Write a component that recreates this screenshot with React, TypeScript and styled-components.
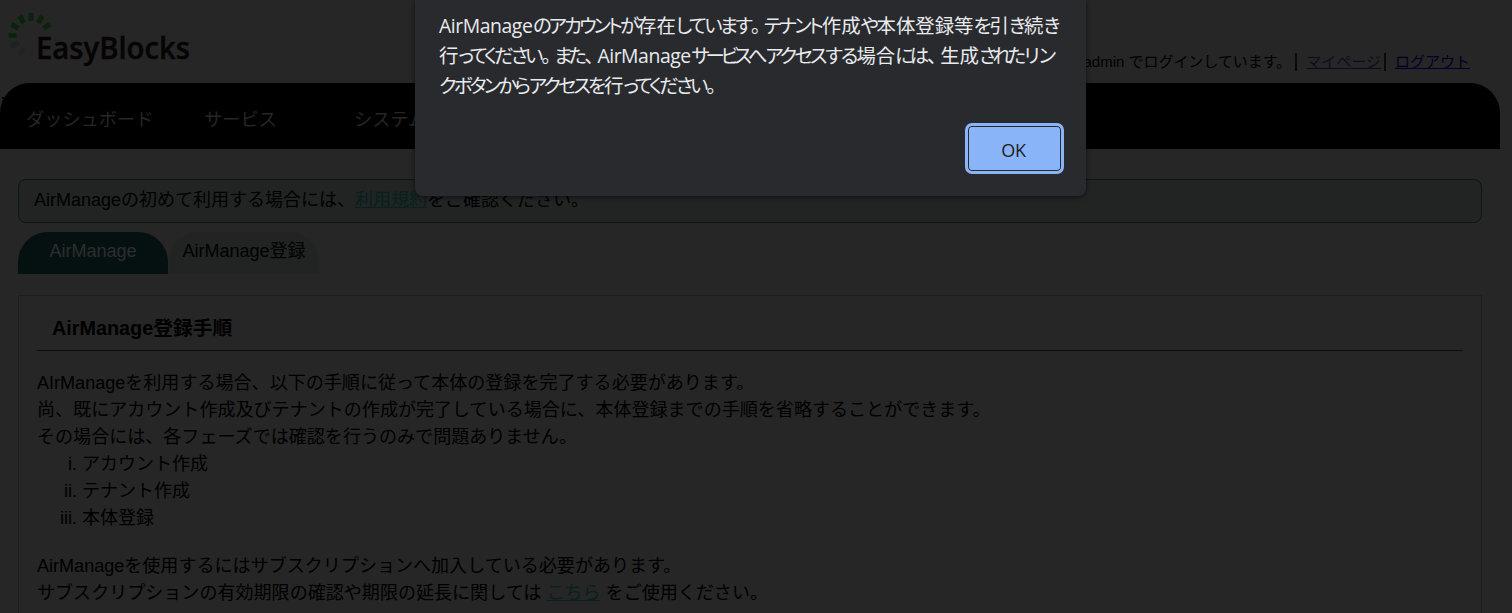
import React from "react";
import styled, { createGlobalStyle } from "styled-components";

const Global = createGlobalStyle`
  * { box-sizing: border-box; }
  html, body { margin: 0; height: 613px; overflow: hidden; background: #262626; }
  body {
    font: 400 18px/27px "Liberation Sans", "Noto Sans CJK JP", sans-serif;
    color: #000;
  }
`;

const Page = styled.div`
  height: 613px;
  overflow: hidden;
  position: relative;
  display: flex;
  flex-direction: column;
`;

const Header = styled.header`
  height: 83px;
  width: 1500px;
  flex: none;
  display: flex;
  justify-content: space-between;
  align-items: flex-start;
  padding-right: 30px;
`;

const Logo = styled.svg`
  display: block;
  width: 200px;
  height: 80px;
  overflow: visible;
`;

const UserBar = styled.div`
  display: flex;
  align-items: center;
  height: 18px;
  margin-top: 53px;
  font-size: 15px;
  line-height: 18px;
  white-space: nowrap;
`;

const Login = styled.span`
  padding-right: 4px;
  letter-spacing: -0.02px;
`;

const HeaderLink = styled.a<{ $color: string; $end: number }>`
  color: ${(p) => p.$color};
  text-decoration: underline;
  border-left: 2px solid #0c0a08;
  padding-left: 9px;
  margin-right: ${(p) => p.$end}px;
`;

const Nav = styled.nav`
  width: 1500px;
  height: 66px;
  flex: none;
  display: flex;
  align-items: center;
  padding: 8px 0 0 26px;
  background: #000;
  border-radius: 30px 30px 0 0;
  color: #262626;
  font-size: 18.2px;
`;

const NavItem = styled.span<{ $width: number }>`
  width: ${(p) => p.$width}px;
  white-space: nowrap;
`;

const Stray = styled.span`
  position: absolute;
  left: 2px;
  top: 97px;
  width: 2px;
  height: 2px;
  background: #000;
`;

const Main = styled.main`
  width: 1464px;
  margin: 30px 0 0 18px;
`;

const Notice = styled.div`
  height: 44px;
  padding: 7px 15px;
  border: 1px solid #071716;
  border-radius: 8px;
  background: #212423;
`;

const GreenLink = styled.a`
  color: #08201f;
  text-decoration: underline;
`;

const Tabs = styled.div`
  display: flex;
  gap: 1px;
  margin-top: 9px;
`;

const Tab = styled.div<{ $active?: boolean }>`
  width: 150px;
  height: 42px;
  padding-top: 6px;
  text-align: center;
  border-radius: 30px 30px 0 0;
  background: ${(p) => (p.$active ? "#051111" : "#212423")};
  color: ${(p) => (p.$active ? "#2c2e2e" : "#000")};
`;

const Panel = styled.section`
  height: 400px;
  margin-top: 21px;
  padding: 12px 18px;
  border: 1px solid #1e1e1e;
`;

const Title = styled.h2`
  margin: 0 0 19px;
  height: 43px;
  padding: 7px 15px 0;
  border-bottom: 1px solid #051111;
  font-size: 19.8px;
  font-weight: 700;
`;

const Text = styled.p`
  margin: 0;
  font-size: 18.06px;
  white-space: nowrap;
`;

const Steps = styled.ol`
  margin: 0 0 21px;
  padding-left: 45px;
  list-style: lower-roman;
`;

const Dialog = styled.div`
  position: absolute;
  left: 415px;
  top: 0;
  width: 671px;
  height: 196px;
  padding: 11px 22px 22px 24px;
  display: flex;
  flex-direction: column;
  justify-content: space-between;
  background: #292a2d;
  border-radius: 0 0 8px 8px;
  box-shadow: 0 1px 5px rgba(0, 0, 0, 0.55);
  color: #e8eaed;
`;

const Line = styled.div`
  display: flex;
  height: 30px;
  font: 400 19.4px/30px "Open Sans", "Noto Sans CJK JP", sans-serif;
  font-feature-settings: "palt";
  white-space: nowrap;
`;

const Kanji = styled.span`
  flex: none;
`;

/* Kana are set tighter than kanji, so each run is spread over its own measure. */
const Kana = styled.span<{ $width: number }>`
  flex: none;
  width: ${(p) => p.$width}px;
  height: 30px;
  padding-right: 2px;
  letter-spacing: -4px;
  text-align: justify;
  text-align-last: justify;
  white-space: normal;
  word-break: keep-all;
`;

const Latin = styled.span`
  flex: none;
  width: 94px;
  letter-spacing: -0.45px;
`;

const OkButton = styled.button`
  align-self: flex-end;
  width: 99px;
  height: 51px;
  padding: 2px 2px 0 0;
  border: 3px solid #8ab4f8;
  border-radius: 7px;
  background: #8ab4f8;
  box-shadow: inset 0 0 0 1px #292a2d;
  color: #202124;
  font: 400 18px/24px "Open Sans", sans-serif;
  letter-spacing: -0.3px;
`;

const dots: [number, string][] = [
  [60, "#0b230c"],
  [30, "#0b230c"],
  [0, "#0b230c"],
  [-30, "#0b230c"],
  [-60, "#0b230c"],
  [-90, "#0b230c"],
  [-120, "#1c241c"],
  [-150, "#212521"],
  [180, "#242524"],
];

type Piece = { latin: string } | { kanji: string } | { kana: string; width: number };

const latin = (text: string): Piece => ({ latin: text });
const kanji = (text: string): Piece => ({ kanji: text });
const kana = (text: string, width: number): Piece => ({ kana: text, width });

const lines: Piece[][] = [
  [
    latin("AirManage"),
    kana("のアカウントが", 104),
    kanji("存在"),
    kana("しています", 75),
    kana("。", 13),
    kana("テナント", 58),
    kanji("作成"),
    kana("や", 16),
    kanji("本体登録等"),
    kana("を", 16),
    kanji("引"),
    kana("き", 15),
    kanji("続"),
    kana("き", 15),
  ],
  [
    kanji("行"),
    kana("ってください", 83),
    kana("。", 13),
    kana("また", 30),
    kana("、", 13),
    latin("AirManage"),
    kana("サービスへ", 74),
    kana("アクセス", 60),
    kana("する", 31),
    kanji("場合"),
    kana("には", 32),
    kana("、", 13),
    kanji("生成"),
    kana("された", 45),
    kana("リン", 30),
  ],
  [
    kana("クボタンから", 90),
    kana("アクセスを", 75),
    kanji("行"),
    kana("ってください", 83),
    kana("。", 12),
  ],
];

function MessagePiece({ piece }: { piece: Piece }) {
  if ("latin" in piece) return <Latin>{piece.latin}</Latin>;
  if ("kanji" in piece) return <Kanji>{piece.kanji}</Kanji>;
  return <Kana $width={piece.width}>{piece.kana}</Kana>;
}

export default function App() {
  return (
    <>
      <Global />
      <Page>
        <Header>
          <Logo viewBox="0 0 200 80">
            {dots.map(([angle, fill]) => (
              <rect key={angle} x="28.5" y="13" width="5" height="8" fill={fill} transform={`rotate(${angle} 31 35.5)`} />
            ))}
            <text x="36" y="59" textLength="154" lengthAdjust="spacingAndGlyphs" fontFamily="Open Sans, sans-serif" fontSize="31.5" fontWeight="600" fill="#060404" stroke="#060404" strokeWidth="0.4">
              EasyBlocks
            </text>
          </Logo>
          <UserBar>
            <Login>admin でログインしています。</Login>
            <HeaderLink $color="#140a20" $end={3}>マイページ</HeaderLink>
            <HeaderLink $color="#000026" $end={0}>ログアウト</HeaderLink>
          </UserBar>
        </Header>
        <Stray />
        <Nav>
          <NavItem $width={178}>ダッシュボード</NavItem>
          <NavItem $width={150}>サービス</NavItem>
          <NavItem $width={150}>システム</NavItem>
        </Nav>
        <Main>
          <Notice>
            AirManageの初めて利用する場合には、<GreenLink>利用規約</GreenLink>をご確認ください。
          </Notice>
          <Tabs>
            <Tab $active>AirManage</Tab>
            <Tab>AirManage登録</Tab>
          </Tabs>
          <Panel>
            <Title>AirManage登録手順</Title>
            <Text>AIrManageを利用する場合、以下の手順に従って本体の登録を完了する必要があります。</Text>
            <Text>尚、既にアカウント作成及びテナントの作成が完了している場合に、本体登録までの手順を省略することができます。</Text>
            <Text>その場合には、各フェーズでは確認を行うのみで問題ありません。</Text>
            <Steps>
              <li>アカウント作成</li>
              <li>テナント作成</li>
              <li>本体登録</li>
            </Steps>
            <Text>AirManageを使用するにはサブスクリプションへ加入している必要があります。</Text>
            <Text>
              サブスクリプションの有効期限の確認や期限の延長に関しては <GreenLink>こちら</GreenLink> をご使用ください。
            </Text>
          </Panel>
        </Main>
        <Dialog>
          <div>
            {lines.map((pieces, i) => (
              <Line key={i}>
                {pieces.map((piece, j) => (
                  <MessagePiece key={j} piece={piece} />
                ))}
              </Line>
            ))}
          </div>
          <OkButton>OK</OkButton>
        </Dialog>
      </Page>
    </>
  );
}
